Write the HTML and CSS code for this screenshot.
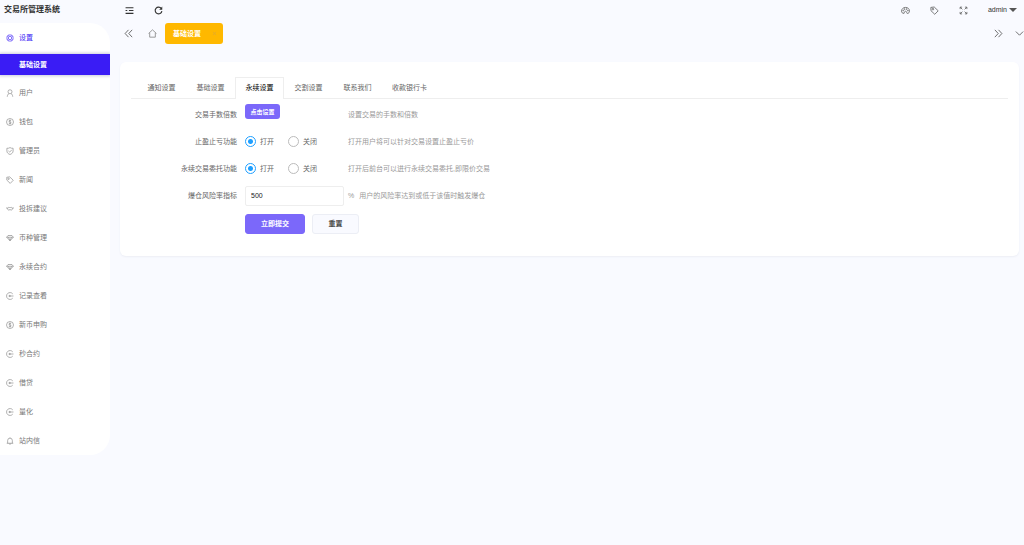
FILE: index.html
```html
<!DOCTYPE html>
<html lang="zh-CN">
<head>
<meta charset="utf-8">
<title>交易所管理系统</title>
<link rel="stylesheet" href="styles.css">
</head>
<body>
<svg class="sprite" aria-hidden="true">
  <symbol id="gear" viewBox="0 0 16 16"><path d="M8 1l1.400 1.500 2-.5.6 2 2 .6-.5 2L15 8l-1.500 1.400.5 2-2 .6-.6 2-2-.5L8 15l-1.400-1.500-2 .5-.6-2-2-.6.5-2L1 8l1.500-1.400-.5-2 2-.6.6-2 2 .5z"/><circle cx="8" cy="8" r="3.500"/></symbol>
  <symbol id="user" viewBox="0 0 16 16"><circle cx="8" cy="5.500" r="4"/><path d="M2.500 15.500c.2-3.500 1.500-5 3.500-6.500M13.500 15.500c-.2-3.500-1.500-5-3.500-6.500"/></symbol>
  <symbol id="dollar" viewBox="0 0 16 16"><circle cx="8" cy="8" r="7"/><path d="M10.300 5.500C9 4.300 5.800 4.500 5.900 6.400c.1 2 4.300 1.200 4.300 3.300 0 1.900-3.300 2.100-4.600.6M8 3.300v9.400"/></symbol>
  <symbol id="shield" viewBox="0 0 16 16"><path d="M8 1.200c2 1.300 4 1.500 6.200 1.300V8c0 3.500-2.700 5.800-6.200 7-3.500-1.200-6.200-3.500-6.200-7V2.500C4 2.700 6 2.500 8 1.200zM4.800 7.800l2.500 2.400 4.200-4.400"/></symbol>
  <symbol id="tag" viewBox="0 0 16 16"><path d="M1.500 2.500l6-.7 7 6.700-6 6.300-6.800-6.500z"/><circle cx="5.200" cy="5.600" r="1.400"/></symbol>
  <symbol id="link" viewBox="0 0 16 16"><path d="M0 6h3.500M12.500 6H16M3.500 6C5 4 7 4.500 8 6c1-1.500 3-2 4.500 0 .8 2-.5 4-2 4.500C9.500 11 8.500 9.500 8 8.500 7.500 9.500 6.500 11 5.500 10.500 4 10 2.700 8 3.500 6z"/></symbol>
  <symbol id="gem" viewBox="0 0 16 16"><path d="M4 3h8l2.700 3.500L8 13.500 1.300 6.500zM1.300 6.500h13.400M5 6.500l3 7 3-7"/></symbol>
  <symbol id="record" viewBox="0 0 16 16"><path d="M13.500 3.800A6.900 6.900 0 1 0 13.500 12.200M5.500 8H15"/><circle cx="7.500" cy="8" r="1.300"/></symbol>
  <symbol id="bell" viewBox="0 0 16 16"><path d="M1.500 12.500h13M3.300 12.500V7a4.700 4.700 0 0 1 9.400 0v5.500M6.300 13c.3 2.300 3.100 2.300 3.400 0M8 1v1.300"/></symbol>
  <symbol id="menu" viewBox="0 0 16 16"><path d="M1 3h14M7 8h8M1 13h14M1 8h3"/></symbol>
  <symbol id="refresh" viewBox="0 0 16 16"><path d="M13 4.500A6 6 0 1 0 14 9"/><path d="M14.700 1v5.500H9.200z" fill="currentColor" stroke="none"/></symbol>
  <symbol id="palette" viewBox="0 0 16 16"><path d="M5.500 13C2.500 13.500 1 11.500 1 9c0-3.600 3-6.500 7-6.500s7 2.500 7 6c0 3-1.500 4.800-3.500 4.800-1.800 0-1-2.300-2-3.300-1.500-1.400-3.300-.2-3.500 1.200z"/><circle cx="4" cy="8" r=".7"/><circle cx="6.500" cy="5.500" r=".7"/><circle cx="10" cy="5.500" r=".7"/><circle cx="12.300" cy="8.300" r=".7"/></symbol>
  <symbol id="full" viewBox="0 0 16 16"><path d="M2 5.500V2h3.500M2 2l4 4M10.500 2H14v3.500M14 2l-4 4M2 10.500V14h3.500M2 14l4-4M14 10.500V14h-3.500M14 14l-4-4"/></symbol>
  <symbol id="left" viewBox="0 0 16 16"><path d="M8 1.500L2 8l6 6.500M14.500 1.500L8.500 8l6 6.500"/></symbol>
  <symbol id="right" viewBox="0 0 16 16"><path d="M8 1.500L14 8l-6 6.500M1.500 1.500L7.500 8l-6 6.500"/></symbol>
  <symbol id="down" viewBox="0 0 16 16"><path d="M1.500 4.500l6.500 6.500 6.500-6.500"/></symbol>
  <symbol id="home" viewBox="0 0 16 16"><path d="M1 8l7-6.500L15 8M3 7v7.500h10V7"/></symbol>
  <symbol id="close" viewBox="0 0 16 16"><path d="M3 3l10 10M13 3L3 13"/></symbol>
</svg>
<div class="app">
  <aside class="side">
    <h1 class="brand">交易所管理系统</h1>
    <nav class="menu">
      <a class="item current" href="#"><svg class="icon"><use href="#gear"/></svg>设置</a>
      <a class="sub" href="#">基础设置</a>
      <a class="item" href="#"><svg class="icon"><use href="#user"/></svg>用户</a>
      <a class="item" href="#"><svg class="icon"><use href="#dollar"/></svg>钱包</a>
      <a class="item" href="#"><svg class="icon"><use href="#shield"/></svg>管理员</a>
      <a class="item" href="#"><svg class="icon"><use href="#tag"/></svg>新闻</a>
      <a class="item" href="#"><svg class="icon"><use href="#link"/></svg>投拆建议</a>
      <a class="item" href="#"><svg class="icon"><use href="#gem"/></svg>币种管理</a>
      <a class="item" href="#"><svg class="icon"><use href="#gem"/></svg>永续合约</a>
      <a class="item" href="#"><svg class="icon"><use href="#record"/></svg>记录查看</a>
      <a class="item" href="#"><svg class="icon"><use href="#dollar"/></svg>新币申购</a>
      <a class="item" href="#"><svg class="icon"><use href="#record"/></svg>秒合约</a>
      <a class="item" href="#"><svg class="icon"><use href="#record"/></svg>借贷</a>
      <a class="item" href="#"><svg class="icon"><use href="#record"/></svg>量化</a>
      <a class="item" href="#"><svg class="icon"><use href="#bell"/></svg>站内信</a>
    </nav>
  </aside>
  <div class="main">
    <header class="topbar">
      <div class="tools dark">
        <button class="tool" type="button" aria-label="菜单"><svg class="icon"><use href="#menu"/></svg></button>
        <button class="tool" type="button" aria-label="刷新"><svg class="icon"><use href="#refresh"/></svg></button>
      </div>
      <div class="tools">
        <button class="tool" type="button" aria-label="主题"><svg class="icon"><use href="#palette"/></svg></button>
        <button class="tool" type="button" aria-label="标签"><svg class="icon"><use href="#tag"/></svg></button>
        <button class="tool" type="button" aria-label="全屏"><svg class="icon"><use href="#full"/></svg></button>
        <button class="account" type="button">admin<span class="caret"></span></button>
      </div>
    </header>
    <div class="pages">
      <button class="step" type="button" aria-label="向左"><svg class="icon"><use href="#left"/></svg></button>
      <a class="step pale" href="#" aria-label="首页"><svg class="icon"><use href="#home"/></svg></a>
      <a class="page" href="#">基础设置<svg class="shut"><use href="#close"/></svg></a>
      <button class="step last" type="button" aria-label="向右"><svg class="icon"><use href="#right"/></svg></button>
      <button class="step more" type="button" aria-label="更多"><svg class="icon"><use href="#down"/></svg></button>
    </div>
    <main class="card">
      <nav class="tabs">
        <a class="tab" href="#">通知设置</a>
        <a class="tab" href="#">基础设置</a>
        <a class="tab on" href="#">永续设置</a>
        <a class="tab" href="#">交割设置</a>
        <a class="tab" href="#">联系我们</a>
        <a class="tab" href="#">收款银行卡</a>
      </nav>
      <form class="form">
        <div class="row">
          <span class="label">交易手数倍数</span>
          <div class="field"><button class="mini" type="button">点击设置</button></div>
          <span class="hint">设置交易的手数和倍数</span>
        </div>
        <div class="row">
          <span class="label">止盈止亏功能</span>
          <div class="field">
            <label class="choice"><input type="radio" name="stop" checked>打开</label>
            <label class="choice"><input type="radio" name="stop">关闭</label>
          </div>
          <span class="hint">打开用户将可以针对交易设置止盈止亏价</span>
        </div>
        <div class="row">
          <span class="label">永续交易委托功能</span>
          <div class="field">
            <label class="choice"><input type="radio" name="entrust" checked>打开</label>
            <label class="choice"><input type="radio" name="entrust">关闭</label>
          </div>
          <span class="hint">打开后前台可以进行永续交易委托,即限价交易</span>
        </div>
        <div class="row">
          <label class="label" for="risk">爆仓风险率指标</label>
          <div class="field"><input class="text" id="risk" type="text" value="500"></div>
          <span class="hint"><span>%</span><span>用户的风险率达到或低于该值时触发爆仓</span></span>
        </div>
        <div class="actions">
          <button class="btn primary" type="submit">立即提交</button>
          <button class="btn" type="reset">重置</button>
        </div>
      </form>
    </main>
  </div>
</div>
</body>
</html>
```
FILE: styles.css
```css
* { box-sizing: border-box; }
body {
  margin: 0;
  min-height: 100vh;
  background: #f9faff;
  color: #666;
  font: 7px/12px "Liberation Sans", "Noto Sans CJK SC", sans-serif;
}
a { color: inherit; text-decoration: none; }
button, input { font: inherit; color: inherit; margin: 0; }
button { padding: 0; border: 0; background: none; cursor: pointer; }
.sprite { display: none; }
.icon {
  display: block;
  flex: none;
  width: 8px;
  height: 8px;
  fill: none;
  stroke: currentColor;
  stroke-width: 1.5;
}
.app { display: grid; grid-template-columns: 110px 1fr; }

.brand {
  margin: 0;
  padding-left: 4px;
  height: 23px;
  font-size: 8px;
  line-height: 20px;
  color: #333;
}
.menu {
  background: #fff;
  border-radius: 0 20px 20px 0;
}
.item {
  display: flex;
  align-items: center;
  gap: 5px;
  height: 29px;
  padding-left: 6px;
  color: #777;
}
.item .icon { stroke-width: 1.3; color: #888; }
.item.current { color: #3c1ff5; }
.item.current .icon { color: #7b68fa; stroke-width: 2; }
.sub {
  display: block;
  margin: 2px 0 3px;
  padding-left: 19px;
  background: #3a1cf5;
  box-shadow: 0 0 3px 1px #c8cbdc;
  clip-path: inset(-4px 0);
  color: #fff;
  font-weight: bold;
  line-height: 21px;
}

.topbar {
  display: flex;
  justify-content: space-between;
  align-items: center;
  height: 20px;
  padding: 0 7px 0 5px;
}
.tools { display: flex; align-items: center; }
.tools.dark { color: #333; }
.tool {
  display: grid;
  place-items: center;
  width: 29px;
  height: 20px;
}
.tool .icon { width: 9px; height: 9px; }
.dark .icon { stroke-width: 2; }
.account {
  display: flex;
  align-items: center;
  gap: 2px;
  margin-left: 10px;
  color: #333;
}
.caret {
  border: 4px solid transparent;
  border-top-color: #555;
  border-bottom: 0;
}

.pages {
  display: flex;
  align-items: center;
  height: 21px;
  margin-top: 3px;
  padding-left: 6px;
}
.step {
  display: grid;
  place-items: center;
  width: 24px;
  color: #555;
}
.step.pale { width: 25px; color: #888; }
.step .icon { width: 9px; height: 9px; }
.step.last { width: 32px; margin-left: auto; }
.step.more { width: 10px; }
.page {
  display: flex;
  align-items: center;
  justify-content: space-between;
  width: 58px;
  height: 21px;
  padding: 0 6px 0 8px;
  border-radius: 3px;
  background: #ffb800;
  color: #fff;
  font-weight: bold;
}
.shut {
  width: 5px;
  height: 5px;
  stroke: #d9a53a;
  stroke-width: 2;
}

.card {
  margin: 18px 5px 0 10px;
  padding: 15px 11px 22px;
  border-radius: 6px;
  background: #fff;
  box-shadow: 0 1px 2px #eceef5;
}
.tabs {
  display: flex;
  height: 22px;
  padding-left: 6px;
  border-bottom: 1px solid #eee;
}
.tab {
  min-width: 49px;
  height: 22px;
  padding: 0 9px;
  border: 1px solid transparent;
  border-bottom: 0;
  text-align: center;
  line-height: 20px;
}
.tab.on {
  border-color: #eee;
  background: #fff;
  color: #000;
}
.form { display: grid; gap: 7px; padding-top: 5px; }
.row {
  display: grid;
  grid-template-columns: 106px 99px 1fr;
  height: 20px;
  line-height: 21px;
}
.label { text-align: right; }
.field {
  display: flex;
  align-items: center;
  gap: 14px;
  margin-left: 8px;
  margin-right: -8px;
}
.hint {
  display: flex;
  gap: 5px;
  margin-left: 12px;
  color: #999;
}
.mini {
  align-self: flex-start;
  width: 35px;
  height: 15px;
  border-radius: 3px;
  background: #7b68fa;
  color: #fff;
  font-size: 6px;
  font-weight: bold;
  line-height: 14px;
}
.choice {
  display: flex;
  align-items: center;
  gap: 4px;
}
.choice input {
  appearance: none;
  width: 11px;
  height: 11px;
  border: 1px solid #bbb;
  border-radius: 50%;
}
.choice input:checked {
  border-color: #1e9fff;
  background: radial-gradient(circle, #1e9fff 2px, #fff 3px);
}
.text {
  width: 100%;
  height: 20px;
  padding: 0 5px;
  border: 1px solid #eee;
  border-radius: 2px;
  background: #fff;
  color: #222;
}
.actions {
  display: flex;
  gap: 7px;
  padding: 2px 0 0 114px;
}
.btn {
  width: 47px;
  height: 20px;
  border: 1px solid #eceef5;
  border-radius: 3px;
  background: #f9faff;
  color: #444;
  font-weight: bold;
}
.btn.primary {
  width: 60px;
  border-color: #7b68fa;
  background: #7b68fa;
  color: #fff;
}
```
